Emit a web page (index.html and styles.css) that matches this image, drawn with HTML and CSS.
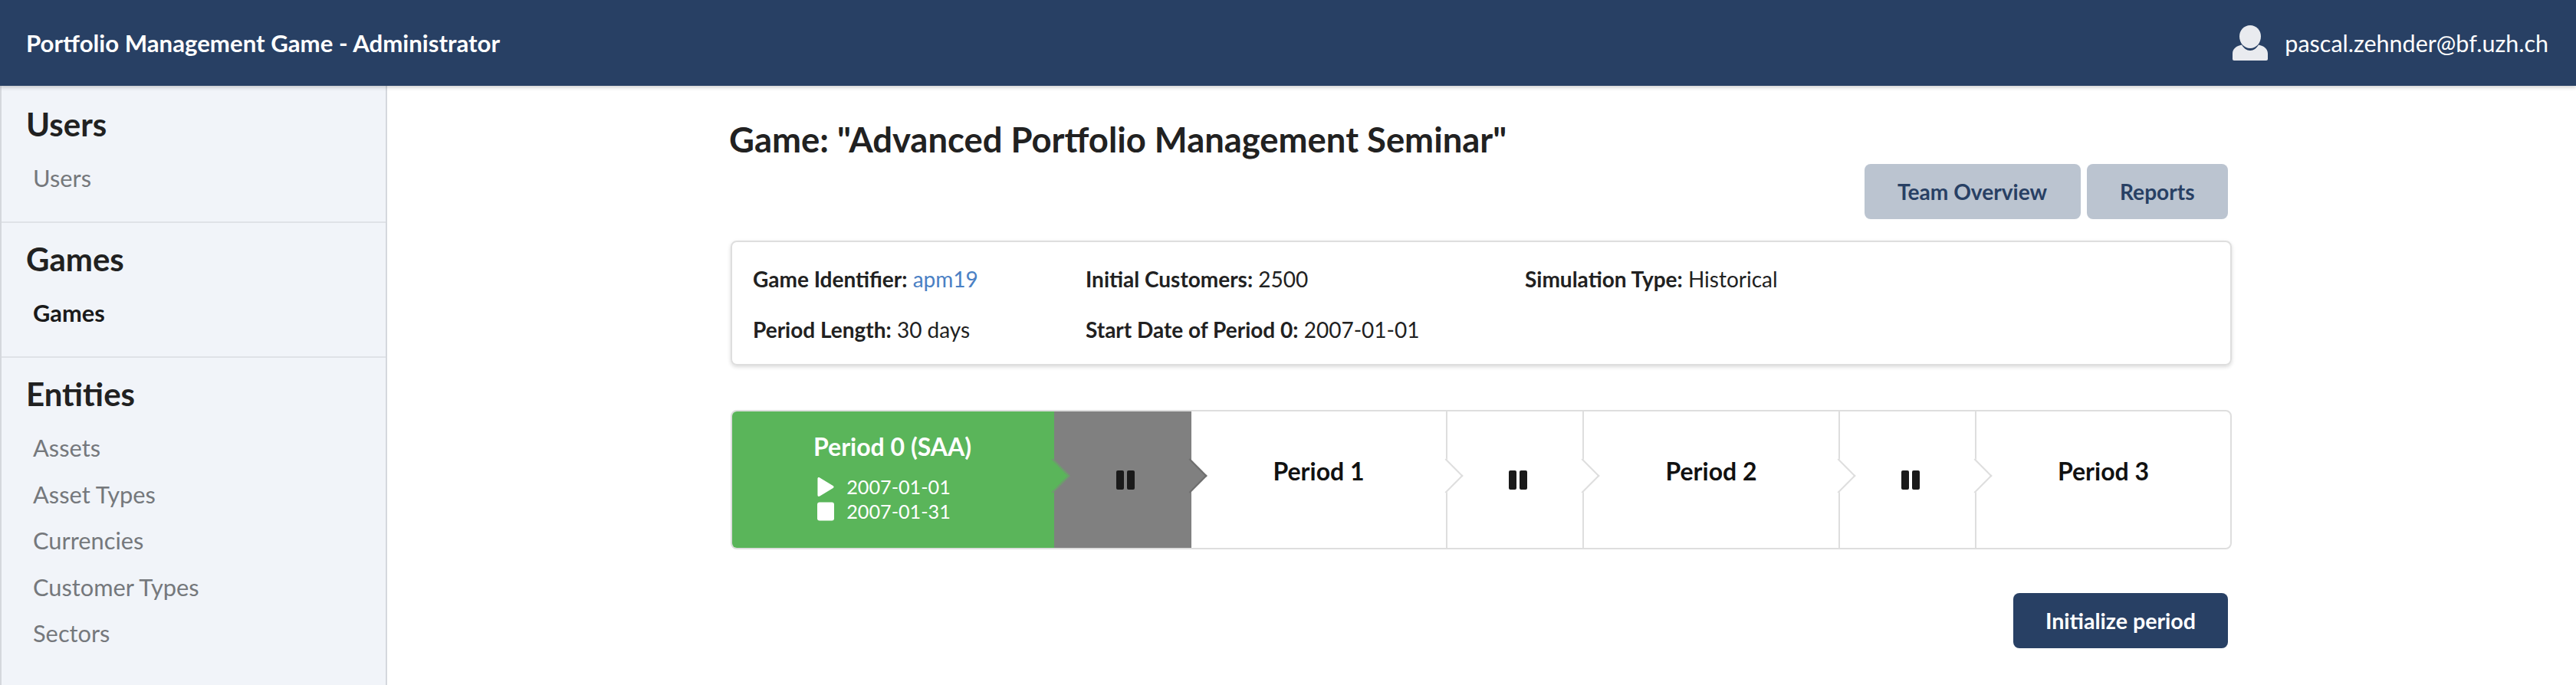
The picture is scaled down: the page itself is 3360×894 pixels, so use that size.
FILE: index.html
```html
<!DOCTYPE html>
<html>
  <head>
    <title>Portfolio Management Game - Administrator</title>
    <meta charset="UTF-8">
    <link rel="stylesheet" href="styles.css">
  </head>
  <body>
    <header class="topbar">
      <div class="brand">Portfolio Management Game - Administrator</div>
      <div class="account">
        <svg class="user-icon" viewBox="0 0 46 46">
          <path d="M23 0c8 0 14 6.500 14 14.500 0 8.500-6 15.500-14 15.500S9 23 9 14.500C9 6.500 15 0 23 0z"/>
          <path d="M12 25.500c2.500 4.500 6.500 7.500 11 7.500s8.500-3 11-7.500c7 1.500 12 5 12 11.500v7c0 1.200-.8 2-2 2H2c-1.200 0-2-.8-2-2v-7c0-6.500 5-10 12-11.500z"/>
        </svg>
        <span>pascal.zehnder@bf.uzh.ch</span>
      </div>
    </header>

    <div class="layout">
      <nav class="sidebar">
        <section class="nav-group">
          <h3>Users</h3>
          <a class="nav-item">Users</a>
        </section>
        <section class="nav-group">
          <h3>Games</h3>
          <a class="nav-item active">Games</a>
        </section>
        <section class="nav-group">
          <h3>Entities</h3>
          <a class="nav-item">Assets</a>
          <a class="nav-item">Asset Types</a>
          <a class="nav-item">Currencies</a>
          <a class="nav-item">Customer Types</a>
          <a class="nav-item">Sectors</a>
        </section>
      </nav>

      <main class="content">
        <h1>Game: "Advanced Portfolio Management Seminar"</h1>

        <div class="actions">
          <a class="btn btn-light">Team Overview</a>
          <a class="btn btn-light">Reports</a>
        </div>

        <div class="info-card">
          <div><b>Game Identifier:</b> <a class="link">apm19</a></div>
          <div><b>Initial Customers:</b> 2500</div>
          <div><b>Simulation Type:</b> Historical</div>
          <div><b>Period Length:</b> 30 days</div>
          <div><b>Start Date of Period 0:</b> 2007-01-01</div>
        </div>

        <div class="steps">
          <div class="step step-period step-first step-done">
            <div class="step-title">Period 0 (SAA)</div>
            <div class="step-date">
              <svg class="date-icon" viewBox="0 0 22 26"><path d="M0 2c0-2 1.500-2.500 3-1.500l18 11c1.300.8 1.300 2.200 0 3l-18 11c-1.500 1-3 .5-3-1.500z"/></svg>
              2007-01-01
            </div>
            <div class="step-date">
              <svg class="date-icon" viewBox="0 0 22 24"><rect width="22" height="24" rx="3"/></svg>
              2007-01-31
            </div>
          </div>
          <div class="step step-pause step-active">
            <div class="pause"><i></i><i></i></div>
          </div>
          <div class="step step-period"><div class="step-title">Period 1</div></div>
          <div class="step step-pause"><div class="pause"><i></i><i></i></div></div>
          <div class="step step-period"><div class="step-title">Period 2</div></div>
          <div class="step step-pause"><div class="pause"><i></i><i></i></div></div>
          <div class="step step-period step-last"><div class="step-title">Period 3</div></div>
        </div>

        <div class="footer-actions">
          <a class="btn btn-dark">Initialize period</a>
        </div>
      </main>
    </div>
  </body>
</html>
```

FILE: styles.css
```css
* {
  box-sizing: border-box;
  margin: 0;
  padding: 0;
}

body {
  font-family: Lato, "Liberation Sans", sans-serif;
  font-size: 28px;
  line-height: 40px;
  color: #212121;
  background-color: #fff;
  height: 894px;
  overflow: hidden;
}

/* top bar */
.topbar {
  height: 112px;
  padding: 0 36px 0 34px;
  display: flex;
  align-items: center;
  justify-content: space-between;
  background-color: #284064;
  color: #fff;
  box-shadow: 0 2px 5px rgba(0,0,0,0.2);
  position: relative;
}

.brand {
  font-size: 31.2px;
  font-weight: 700;
}

.account {
  display: flex;
  align-items: center;
  gap: 22px;
  font-size: 30.5px;
}

.user-icon {
  width: 46px;
  height: 46px;
  fill: #e9ebef;
}

.layout {
  display: flex;
  height: 782px;
}

/* sidebar */
.sidebar {
  width: 505px;
  flex: none;
  padding-top: 3px;
  background-color: #f1f4f9;
  border-left: 2px solid #d5d8dd;
  border-right: 2px solid #d5d8dd;
}

.nav-group {
  padding: 25px 0 0 32px;
  height: 176px;
  border-bottom: 2px solid #dfe2e7;
}

.nav-group:last-child {
  border-bottom: none;
  height: auto;
}

.nav-group h3 {
  font-size: 42px;
  line-height: 44px;
  font-weight: 700;
  margin-bottom: 29px;
}

.nav-item {
  display: block;
  margin-left: 9px;
  height: 60.6px;
  font-size: 30.8px;
  line-height: 40px;
  color: #75787c;
}

.nav-item.active {
  font-weight: 700;
  color: #1a1a1a;
}

/* main part */
.content {
  width: 1958px;
  margin-left: 448px;
  padding-top: 46px;
}

h1 {
  font-size: 45.4px;
  line-height: 48px;
  font-weight: 700;
  margin-left: -2px;
}

.actions {
  display: flex;
  justify-content: flex-end;
  gap: 8px;
  margin-top: 8px;
  padding-right: 5px;
}

.btn {
  display: flex;
  align-items: center;
  justify-content: center;
  height: 72px;
  padding: 0 42px;
  border-radius: 8px;
  font-size: 28.1px;
  font-weight: 700;
}

.btn-light {
  padding: 0 43.5px;
  background-color: #bbc4d0;
  color: #284064;
}

.btn-dark {
  background-color: #284064;
  color: #fff;
  font-size: 28.6px;
}

.info-card {
  display: grid;
  grid-template-columns: 434px 573px 1fr;
  grid-auto-rows: 66px;
  margin-top: 28px;
  height: 163px;
  padding: 15px 27px 0;
  border: 2px solid #dedede;
  border-radius: 8px;
  box-shadow: 0 2px 5px rgba(0,0,0,0.15);
  line-height: 66px;
}

.info-card b {
  font-weight: 700;
}

.link {
  color: #4a80c4;
}

/* steps */
.steps {
  display: flex;
  height: 182px;
  margin-top: 58px;
  border: 2px solid #dedede;
  border-radius: 8px;
}

.step {
  position: relative;
  flex: none;
  display: flex;
  flex-direction: column;
  align-items: center;
  border-right: 2px solid #dedede;
}

.step::after {
  content: "";
  position: absolute;
  top: 68px;
  right: -16px;
  width: 30px;
  height: 30px;
  transform: rotate(45deg);
  background-color: #fff;
  border-top: 2px solid #dedede;
  border-right: 2px solid #dedede;
  z-index: 1;
}

.step-period {
  width: 334px;
  padding-top: 58px;
}

.step-pause {
  width: 178px;
  justify-content: center;
  padding-left: 8px;
}

.step-first {
  width: 420px;
  padding-top: 26px;
  border-radius: 6px 0 0 6px;
}

.step-last {
  flex: 1;
  border-right: none;
}

.step-last::after {
  display: none;
}

.step-title {
  font-size: 32px;
  line-height: 40px;
  font-weight: 700;
  color: #111;
}

.step-done {
  background-color: #5ab55a;
  color: #fff;
  border-right-color: #5ab55a;
}

.step-done .step-title {
  color: #fff;
  margin-bottom: 16px;
}

.step-done::after {
  background-color: #5ab55a;
  border-color: #6f9a6f;
}

.step-active {
  width: 179px;
  background-color: #808080;
  border-right-color: #808080;
}

.step-active::after {
  background-color: #808080;
  border-color: #6f6f6f;
}

.step-date {
  display: flex;
  align-items: center;
  gap: 16px;
  height: 32px;
  margin-right: 22px;
  line-height: 32px;
  font-size: 25.2px;
}

.date-icon {
  width: 22px;
  height: 25px;
  fill: #fff;
}

.pause {
  display: flex;
  gap: 4px;
}

.pause i {
  display: block;
  width: 10px;
  height: 25px;
  border-radius: 2px;
  background-color: #1a1a1a;
}

.footer-actions {
  display: flex;
  justify-content: flex-end;
  margin-top: 57px;
  padding-right: 5px;
}
```
